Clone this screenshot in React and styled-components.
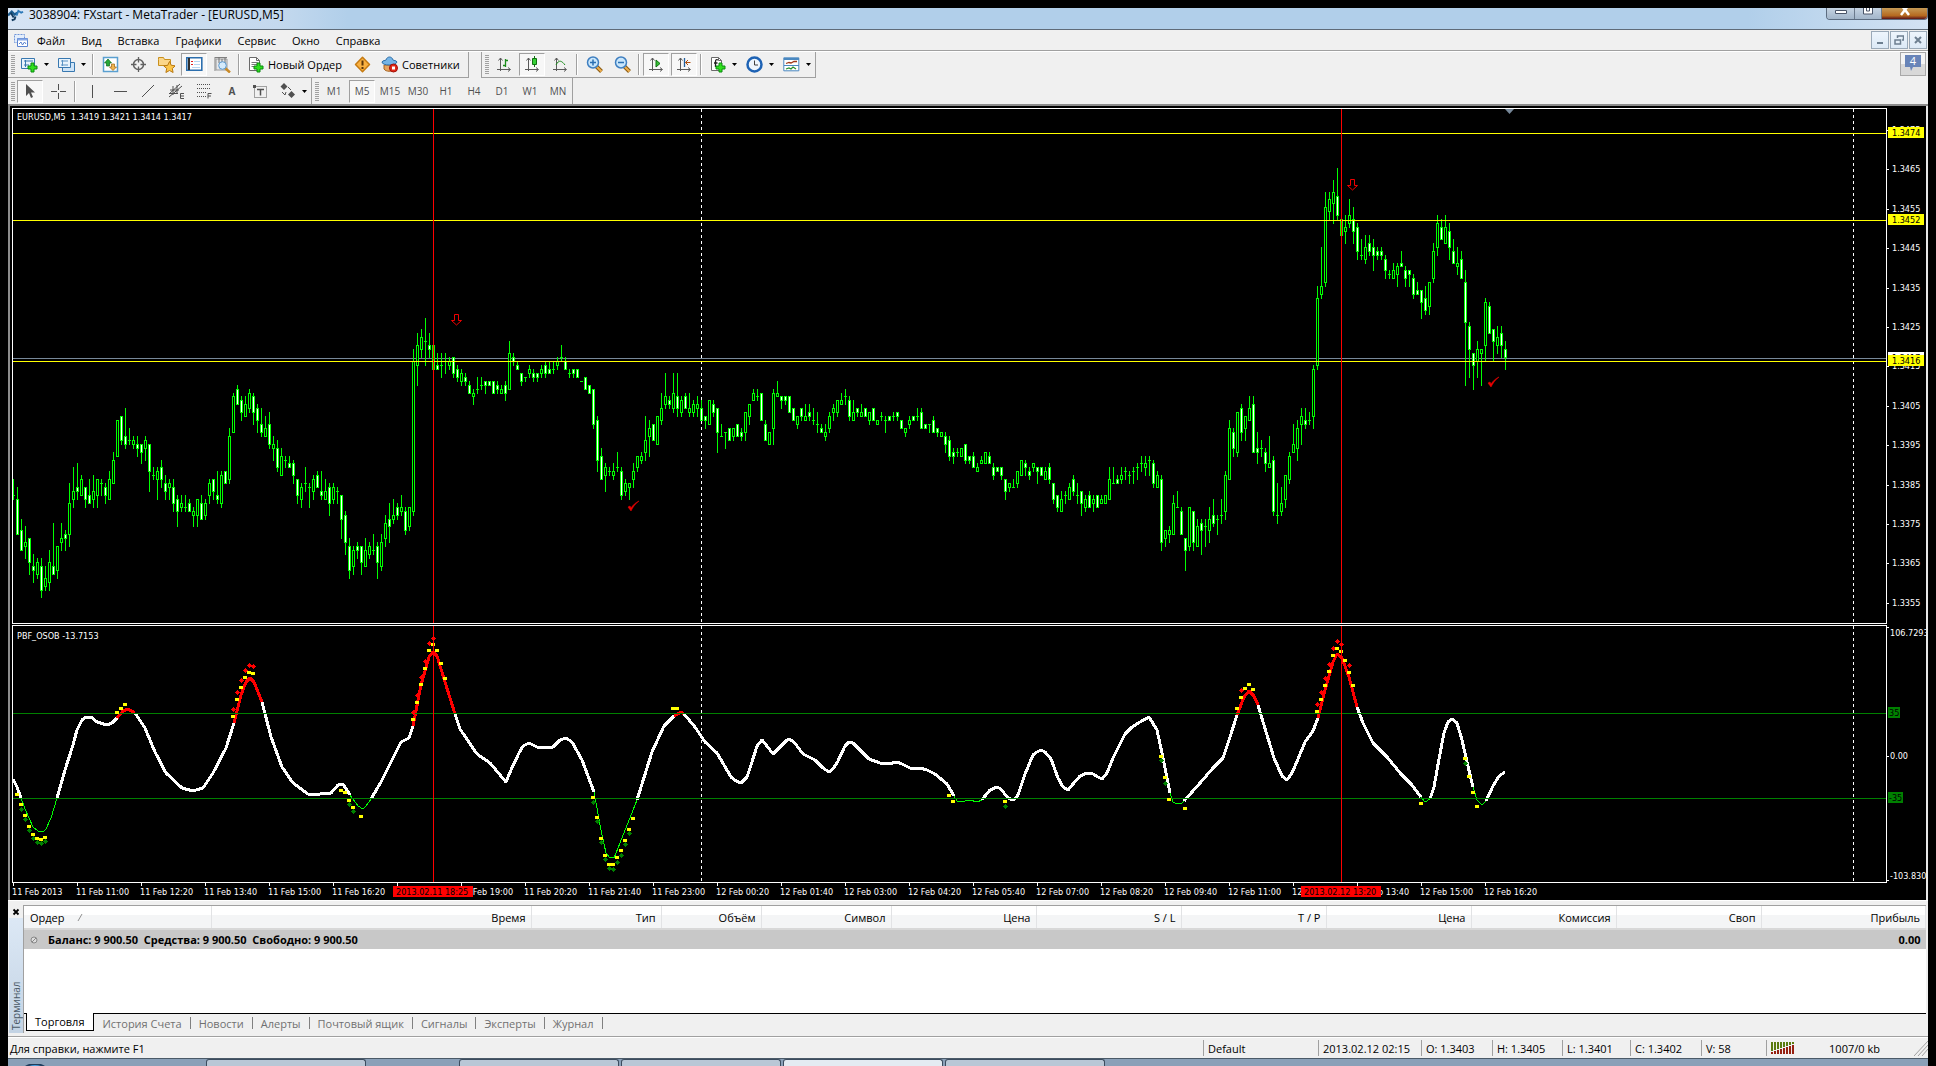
import React, { useState } from 'react'
import styled, { createGlobalStyle, css } from 'styled-components'

const GlobalStyle = createGlobalStyle`
  * { box-sizing: border-box; }
  body {
    margin: 0;
    background: #000;
    color: #000;
    font-family: "Open Sans", "Noto Sans", sans-serif;
    font-size: 11px;
  }
  button { font: inherit; color: inherit; padding: 0; border: 0; background: none; }
`

/* ---------- window ---------- */

const Desktop = styled.div`
  min-height: 100vh;
  padding: 8px 8px 0;
  overflow: hidden;
`

const TitleBar = styled.header`
  display: flex;
  justify-content: space-between;
  height: 22px;
  background: linear-gradient(90deg, #d6e4f4 0, #c4d9ee 270px, #b1cfea 340px, #b1cfea calc(100% - 180px), #d3e2f3 100%);
  border-bottom: 1px solid #5f6b78;
`

const Title = styled.h1`
  display: flex;
  gap: 5px;
  margin: 0;
  font-size: 12px;
  line-height: 14px;
  font-weight: 400;
`

const WindowButtons = styled.div`
  display: flex;
  height: 12px;
  border: 1px solid #5c6c80;
  border-top: 0;
  border-radius: 0 0 4px 4px;
  overflow: hidden;
`

const WindowButton = styled.button`
  display: flex;
  justify-content: center;
  width: ${p => (p.$close ? 46 : 27)}px;
  border-left: ${p => (p.$first ? 0 : '1px solid #6b7a8c')};
  background: ${p => (p.$close ? 'linear-gradient(#c69a55, #b5691f 70%, #5a1218)' : 'linear-gradient(#c5d3e2, #a3b6ca)')};
`

const MenuBar = styled.nav`
  display: flex;
  align-items: center;
  height: 21px;
  padding-left: 5px;
  background: #f0f0f0;
  border-bottom: 1px solid #a0a0a0;
`

const MenuItems = styled.div`
  display: flex;
  gap: 16px;
  padding-left: 9px;
`

const MenuItem = styled.button`
  height: 19px;
  line-height: 17px;
`

const MdiButtons = styled.div`
  display: flex;
  gap: 1px;
  margin-left: auto;
  padding-right: 1px;
`

const MdiButton = styled.button`
  display: flex;
  align-items: center;
  justify-content: center;
  width: 18px;
  height: 18px;
  border: 1px solid #9aa9b8;
  background: linear-gradient(#eef5fc, #dce9f6);
`

const ToolArea = styled.div`
  display: flex;
  justify-content: space-between;
  background: #f0f0f0;
  border-top: 1px solid #fff;
  border-bottom: 2px solid #8c8c8c;
`

const ToolRows = styled.div`
  flex: 1;
`

const ToolRow = styled.div`
  display: flex;
  gap: ${p => p.$gap || 0}px;
`

const Toolbar = styled.div`
  display: flex;
  align-items: center;
  height: 26px;
  border-right: 1px solid #a0a0a0;
  border-left: ${p => (p.$edge ? '1px solid #a0a0a0' : '0')};
  border-bottom: ${p => (p.$last ? 0 : '1px solid #a0a0a0')};
  padding-left: 2px;
`

const Grip = styled.span`
  width: 4px;
  height: 19px;
  margin: 0 1px;
  background: repeating-linear-gradient(#a0a0a0 0 1px, #f0f0f0 1px 2px);
`

const ToolButton = styled.button`
  display: flex;
  align-items: center;
  justify-content: center;
  width: 26px;
  height: 23px;
  margin: 0 1px;
  color: #505050;
  font-size: 10px;
  ${p => p.$pressed && css`
    border: 1px solid #a0a0a0;
    border-right-color: #fff;
    border-bottom-color: #fff;
    background: #f7f7f7;
  `}
`

const DropButton = styled(ToolButton)`
  justify-content: flex-start;
  width: 35px;
  padding-left: 4px;
  gap: 5px;
`

const TextButton = styled.button`
  display: flex;
  align-items: center;
  gap: 4px;
  height: 23px;
  min-width: ${p => p.$min}px;
  padding-left: 5px;
`

const Divider = styled.span`
  width: 2px;
  height: 21px;
  margin: 0 2px;
  border-left: 1px solid #a0a0a0;
  border-right: 1px solid #fff;
`

const NoticeButton = styled.button`
  width: 26px;
  height: 24px;
  margin: 0 2px;
  border: 1px solid #a8a8a8;
  background: linear-gradient(#f4f4f4 50%, #d8d8d8 50%);
`

/* ---------- chart ---------- */

const ChartArea = styled.main`
  padding: 2px 0 0 2px;
  border-left: 2px solid #8c8c8c;
  border-right: 2px solid #e8e8e8;
  background: #000;
`

const ChartRow = styled.div`
  display: flex;
  margin-bottom: 1px;
`

const Pane = styled.section`
  flex: 1;
  height: ${p => p.$height}px;
  border: 1px solid #fff;
`

const Scale = styled.aside`
  flex: none;
  width: 39px;
`

const Drawing = styled.svg`
  display: block;
  width: 100%;
  height: 100%;
  overflow: hidden;
  font-family: "DejaVu Sans Condensed", "DejaVu Sans", sans-serif;
  font-size: 9px;
`

const TimeScale = styled.footer`
  height: 17px;
  margin-top: -1px;
`

/* ---------- terminal ---------- */

const Terminal = styled.section`
  display: flex;
  padding: 4px 2px 3px 0;
  background: #f0f0f0;
  border-top: 1px solid #fff;
  border-bottom: 1px solid #a0a0a0;
`

const TerminalSide = styled.div`
  display: flex;
  flex-direction: column;
  width: 15px;
  padding-left: 1px;
`

const CloseTerminal = styled.button`
  height: 13px;
  line-height: 0;
`

const TerminalName = styled.div`
  flex: 1;
  padding: 3px 0;
  background: linear-gradient(#c3d3e4, #dce8f5);
  color: #4b5a68;
  font-size: 10px;
  line-height: 14px;
  writing-mode: vertical-rl;
  transform: rotate(180deg);
`

const TerminalBody = styled.div`
  flex: 1;
  border-left: 1px solid #a0a0a0;
  border-top: 1px solid #a0a0a0;
`

const Sheet = styled.div`
  height: 108px;
  background: #fff;
  border-bottom: 1px solid #000;
`

const Orders = styled.table`
  width: 100%;
  table-layout: fixed;
  border-collapse: collapse;
  line-height: 16px;
`

const HeadCell = styled.th`
  height: 23px;
  padding: 1px 5px 0 6px;
  font-weight: 400;
  text-align: ${p => (p.$left ? 'left' : 'right')};
  background: linear-gradient(#fff 40%, #f4f5f6 41%);
  border-right: 1px solid #e2e3e5;
  border-bottom: 2px solid #d8d8d8;
`

const SumCell = styled.td`
  height: 20px;
  padding: 0 5px 0 6px;
  font-weight: 700;
  background: #c8c8c8;
  text-align: ${p => (p.$right ? 'right' : 'left')};
  span { display: flex; align-items: center; gap: 10px; white-space: pre; }
`

const Tabs = styled.div`
  display: flex;
  height: 19px;
  padding-left: 2px;
`

const Tab = styled.button`
  height: 18px;
  padding: 0 9px 0 8px;
  color: #707070;
  background: linear-gradient(#808080, #808080) right 3px / 1px 12px no-repeat;
  ${p => p.$active && css`
    margin-top: -1px;
    color: #000;
    background: #fff;
    border: 1px solid #000;
    border-top: 0;
  `}
`

const StatusBar = styled.footer`
  display: flex;
  align-items: center;
  height: 22px;
  background: #f0f0f0;
  border-top: 1px solid #fff;
  border-bottom: 1px solid #4b5a68;
`

const StatusCell = styled.span`
  display: flex;
  align-items: center;
  width: ${p => p.$width}px;
  height: 16px;
  padding-left: 4px;
  border-left: 1px solid #a0a0a0;
`

const StatusHelp = styled.span`
  flex: 1;
  padding-left: 2px;
`

const Traffic = styled.span`
  flex: 1;
  text-align: center;
`

const TaskBar = styled.div`
  display: flex;
  height: 7px;
  background: #8aa0b8;
  overflow: hidden;
`

const StartZone = styled.div`
  flex: none;
  width: ${p => p.$width}px;
  padding-left: ${p => p.$pad}px;
`

const TaskItem = styled.div`
  flex: none;
  width: 160px;
  margin-right: 2px;
  border: 1px solid #3c4c5e;
  border-bottom: 0;
  border-radius: 3px 3px 0 0;
  background: ${p => (p.$active ? '#e4ebf2' : '#b9c7d6')};
`

/* ---------- data ---------- */

// high, body top, body bottom, low as points under 1.3416; d = falling bar
const BARS = `
30,34,34,35 32,35,44,44d 40,43,48,48d 42,46,47,50 45,45,51,54d 49,52,53,56d 50,51,54,55 50,52,58,60d 52,55,57,58 48,51,56,58
41,52,54,54d 47,47,53,55 41,45,46,48 43,44,45,48d 31,36,44,47 27,33,35,37 26,32,33,35d 29,30,34,34 32,32,35,37d 30,34,36,36d
29,33,35,37 30,30,34,37 30,31,31,34 31,32,34,36d 28,30,35,35 23,25,31,31 15,15,24,24 14,14,20,21d 12,19,21,22d 17,20,20,21
19,20,21,22 19,21,22,24d 21,21,23,26d 19,20,22,25 21,21,28,33d 27,29,29,30 27,28,30,35 25,27,30,32d 29,31,33,35d 30,31,32,35
30,32,36,38d 34,35,38,42d 34,36,37,38 34,37,37,38 35,36,38,38d 37,38,39,42 35,35,39,42 34,36,40,40d 35,36,39,40 30,31,34,36
30,30,33,35d 28,34,35,36d 28,29,36,37 28,28,31,31d 17,19,30,31 8,9,18,18 6,7,11,11d 9,10,13,15d 9,11,14,14 7,8,12,13
8,9,13,16d 11,12,15,18d 12,16,18,19d 14,17,19,19 13,16,21,22d 19,21,22,25 20,22,27,28d 22,24,29,29 24,25,25,27 24,26,27,27d
25,26,29,31d 30,30,34,36d 31,32,35,37 27,31,31,33 31,32,32,37 29,30,33,35 28,29,32,32d 28,33,34,35d 30,33,35,35 31,32,36,39d
31,32,35,36 32,33,33,36 34,34,40,45d 38,39,46,49d 45,47,53,55d 47,48,52,54 46,47,48,50d 47,47,51,54d 45,48,52,52 46,47,49,50
44,48,48,49 46,47,51,55d 44,46,52,53 39,41,45,47 36,40,42,46d 35,39,40,41 36,37,39,40d 34,37,38,39 37,38,43,44d 37,37,42,43
-3,0,38,39 -7,-4,1,6 -8,-6,-3,-1 -11,-5,-5,1 -7,-4,-3,-1d -4,-4,2,2d -2,1,2,2d -2,1,1,4 -2,0,0,3 -1,0,1,2
-1,-1,3,4d 1,2,4,5d 2,3,5,6 3,4,5,6d 5,6,8,8d 7,8,9,11 4,7,7,8 4,6,6,7 5,5,6,8d 5,5,6,6d
5,5,8,8d 5,6,7,8d 6,7,8,8 5,6,8,10d -5,-2,7,7 -2,-1,0,1d 0,1,2,2d 3,3,5,6d 4,4,4,5 1,2,3,4
2,3,4,5d 3,3,4,5d 1,2,3,4 0,1,3,4d 0,2,3,3d 0,2,2,3 -1,0,1,2 -4,-1,-1,0 -1,0,2,2d 2,3,3,4
2,2,3,4d 2,2,4,4d 5,5,5,5 4,4,7,7d 6,6,8,8d 7,7,16,17d 14,15,25,28d 22,24,30,30d 26,27,29,33 27,28,28,29
26,28,29,30 23,27,27,28 27,28,34,35d 30,31,33,34 31,31,32,35 26,28,30,32 24,24,27,28 23,24,25,26 14,20,23,25 15,17,19,24
16,16,20,20d 14,14,21,21 8,12,15,16 3,9,11,12 9,10,11,12d 3,8,12,13 3,9,12,14d 9,10,13,14 8,9,12,12d 8,12,13,14
10,11,13,14 9,11,12,14 10,12,15,15d 14,14,15,17d 10,10,16,16 10,11,13,14d 12,12,18,23d 16,19,19,19 18,18,18,22 17,17,20,20d
17,17,19,20 16,16,19,19d 17,18,19,20d 13,13,18,20 11,11,14,16 7,8,10,10 7,9,9,10 8,8,15,15d 15,16,20,20d 18,18,21,21
7,8,17,21 5,8,9,9 9,9,10,12d 9,9,10,11d 9,9,13,13d 12,12,15,15d 14,14,16,17 12,12,14,15d 11,14,15,15 11,13,14,15d
12,15,15,16 13,16,16,18 16,17,18,18d 16,18,19,20 13,14,17,18 11,12,13,15 10,10,13,14 8,10,11,11 7,9,9,11 9,10,14,15d
10,13,15,15 12,12,13,14d 11,13,14,14 12,12,14,14d 13,13,15,16 12,12,15,15d 15,15,16,16 13,14,14,15 14,15,15,18 14,14,15,15d
13,14,14,15 13,13,14,15d 15,15,17,17d 17,17,18,19 14,15,16,17 14,14,15,15d 12,14,14,15 12,13,17,17d 16,16,17,17d 16,16,16,18
14,15,18,18d 17,17,18,19d 18,18,19,19 18,19,21,23d 19,20,24,25d 22,23,24,26d 22,23,23,24 22,22,24,24 21,21,25,26d 24,24,25,26d
23,24,27,27d 26,27,28,28 24,25,26,26 23,23,26,26 23,24,26,26d 26,27,29,30d 27,27,28,28d 27,27,29,30d 30,30,33,35d 31,31,32,33
30,32,32,32 28,28,31,32 25,25,29,29 25,26,27,29d 27,28,29,30d 26,26,27,28 27,27,28,31d 27,27,29,29d 27,28,30,30 26,27,30,31d
31,31,35,36d 34,34,37,38d 33,35,38,38 33,34,34,36 31,32,35,35 29,30,33,34d 31,34,34,36 33,33,36,39d 34,35,37,38 33,34,37,37d
34,35,36,38 34,34,37,37d 34,35,36,36 34,34,36,36 27,30,35,35 27,31,31,31 29,30,31,31d 27,29,30,31 27,28,28,30 28,29,29,31
27,28,28,31 26,27,27,30 24,26,26,28 24,26,27,29 24,25,25,29 25,26,31,32d 28,29,32,32 29,30,46,48d 43,43,45,47 42,43,44,46
34,36,44,44 33,37,37,37 37,38,44,44d 45,45,48,53d 37,37,47,48 38,38,46,48d 40,42,47,47 40,41,43,49d 40,42,42,47 37,40,43,46
35,39,41,42d 39,40,40,44 35,39,39,41 28,29,38,40 15,17,30,30 17,18,22,24d 13,13,23,24 11,12,18,20d 14,14,17,20 9,12,15,15
9,11,23,23d 18,22,23,26d 20,22,22,24 22,23,26,28d 19,26,27,27 24,25,38,39d 31,39,39,41 32,36,38,39 29,29,35,37 23,24,30,31
16,21,23,23 15,17,22,25 12,14,16,21 12,15,16,17d 13,15,15,16 1,2,14,17 -19,-16,1,2 -29,-19,-17,-16 -43,-39,-20,-19 -43,-41,-38,-36
-46,-43,-40,-35 -49,-42,-37,-36d -36,-36,-32,-32d -37,-34,-33,-30 -41,-37,-35,-34 -39,-36,-33,-30d -35,-34,-28,-26d -31,-27,-27,-26 -32,-29,-26,-25 -32,-30,-28,-27d
-31,-29,-27,-23d -29,-28,-27,-26d -29,-28,-27,-26d -27,-26,-23,-21d -23,-22,-22,-21 -25,-23,-21,-21 -25,-24,-22,-19 -28,-25,-24,-24d -24,-23,-21,-19d -23,-23,-22,-19d
-22,-21,-17,-16d -20,-18,-17,-17d -18,-18,-15,-11d -19,-16,-13,-12d -20,-20,-14,-12 -30,-28,-21,-20 -37,-35,-29,-27 -36,-34,-31,-31d -37,-34,-30,-30 -35,-33,-29,-26d
-31,-28,-25,-25d -29,-25,-24,-22 -28,-26,-21,-21d -23,-20,-10,6d -10,-9,-3,4d -2,-2,1,7d -5,-3,0,4 -3,-3,-2,6 -16,-15,-4,0 -15,-14,-7,-7d
-8,-8,-5,0d -9,-6,-4,-2 -9,-7,-4,-1d -5,-3,-1,2d
`.trim().split(/\s+/).map(row => ({ down: row.endsWith('d'), v: row.replace('d', '').split(',').map(Number) }))

// oscillator, split where its colour changes: w neutral, r overbought, g oversold
const WAVE = [
  ['w', '13,779 17,787 21,798'],
  ['g', '21,798 25,809 29,818 33,827 38,831 43,832 46,829 51,818 57,798'],
  ['w', '57,798 65,770 73,745 77,730 82,720 86,717 91,717 97,722 107,725 112,723 117,718'],
  ['r', '117,718 123,711 128,709 135,713'],
  ['w', '135,713 145,728 155,752 166,773 182,788 193,791 203,788 213,773 226,748 234,723'],
  ['r', '234,723 241,695 246,682 250,678 254,682 262,702'],
  ['w', '262,702 271,737 282,767 293,783 308,794 320,794 331,793 338,785 343,784 350,795'],
  ['g', '350,795 358,806 363,809 366,806 371,799'],
  ['w', '371,799 381,782 401,742 409,738 413,726'],
  ['r', '413,726 421,685 429,657 433,652 437,656 445,682 455,714'],
  ['w', '455,714 460,729 477,754 490,763 506,782 511,770 519,753 523,746 529,743 537,747 553,747 560,740 566,738 572,742 582,760 594,792'],
  ['g', '594,792 601,830 606,853 609,857 614,858 620,843 637,800'],
  ['w', '637,800 652,752 664,726 674,716'],
  ['r', '674,716 681,712 684,714'],
  ['w', '684,714 695,727 705,742 717,753 731,777 736,781 741,783 747,777 752,762 757,746 762,740 767,746 773,754 780,747 787,740 789,739 794,742 803,754 815,760 823,768 829,772 833,769 838,761 845,746 849,742 853,743 862,752 869,759 880,763 888,764 897,762 902,764 912,769 920,768 927,770 935,774 947,784 954,796'],
  ['g', '954,796 957,801 965,801 970,800 977,802 982,800'],
  ['w', '982,800 985,796 990,790 997,787 1001,789 1007,797 1012,800 1015,799 1018,795 1025,774 1033,755 1037,752 1041,750 1045,752 1051,759 1058,778 1063,787 1068,790 1073,784 1080,776 1087,773 1093,774 1098,777 1102,779 1107,773 1113,758 1125,734 1132,727 1140,722 1149,717 1157,730 1162,753 1170,793'],
  ['g', '1170,793 1173,802 1177,804 1182,803 1184,801'],
  ['w', '1184,801 1192,792 1200,783 1213,768 1223,758 1230,737 1237,715'],
  ['r', '1237,715 1244,697 1249,691 1254,696 1258,705'],
  ['w', '1258,705 1267,735 1274,758 1282,776 1287,780 1292,773 1298,759 1305,742 1313,731 1318,718'],
  ['r', '1318,718 1325,690 1333,662 1337,654 1342,658 1349,677 1357,707'],
  ['w', '1357,707 1363,723 1373,743 1387,757 1401,774 1411,784 1421,797'],
  ['g', '1421,797 1425,802 1430,799'],
  ['w', '1430,799 1434,787 1439,759 1444,733 1448,722 1452,719 1457,723 1462,740 1467,762 1473,787'],
  ['g', '1473,787 1477,800 1482,805 1486,801'],
  ['w', '1486,801 1493,786 1499,776 1505,772'],
]
const WAVE_COLOR = { w: '#fff', r: '#f00', g: '#0f0' }

const points = text => text.split(' ').map(p => p.split(',').map(Number))

const YELLOW = points('17,794 21,804 25,815 29,826 33,834 37,838 41,839 45,837 117,712 121,708 125,704 233,716 237,699 241,687 245,677 249,672 253,673 341,790 345,792 349,800 353,807 361,816 413,719 417,702 421,684 425,668 429,650 433,644 437,650 441,663 445,678 593,797 597,817 601,838 605,855 609,864 613,864 617,857 621,850 625,840 629,829 633,818 673,708 677,708 949,795 953,801 1005,801 1161,756 1165,777 1169,799 1185,808 1237,708 1241,697 1245,688 1249,684 1253,689 1317,711 1321,699 1325,685 1329,671 1333,655 1337,648 1341,651 1345,660 1349,672 1353,685 1421,803 1465,758 1469,776 1473,792 1477,806')
const RED = points('233,709 237,692 241,680 245,670 249,665 253,666 413,712 417,695 421,677 425,661 429,643 433,638 1241,690 1317,704 1321,692 1325,678 1329,664 1333,648 1337,641 1341,644 1349,665')
const GREEN = points('21,809 25,819 29,830 33,838 37,842 41,843 45,841 349,804 353,811 593,802 597,821 601,842 605,859 609,868 613,869 617,862 621,855 625,844 629,833 1005,806 1161,760 1165,783 1465,763')

const TIMES = ['11 Feb 2013', '11 Feb 11:00', '11 Feb 12:20', '11 Feb 13:40', '11 Feb 15:00', '11 Feb 16:20', '11 Feb 17:40', '11 Feb 19:00',
  '11 Feb 20:20', '11 Feb 21:40', '11 Feb 23:00', '12 Feb 00:20', '12 Feb 01:40', '12 Feb 03:00', '12 Feb 04:20', '12 Feb 05:40',
  '12 Feb 07:00', '12 Feb 08:20', '12 Feb 09:40', '12 Feb 11:00', '12 Feb 12:20', '12 Feb 13:40', '12 Feb 15:00', '12 Feb 16:20']

const COLUMNS = [['Ордер', 187], ['Время', 320], ['Тип', 130], ['Объём', 100], ['Символ', 130], ['Цена', 145], ['S / L', 145], ['T / P', 145],
  ['Цена', 145], ['Комиссия', 145], ['Своп', 145], ['Прибыль']]

const MENU = ['Файл', 'Вид', 'Вставка', 'Графики', 'Сервис', 'Окно', 'Справка']
const PERIODS = ['M1', 'M5', 'M15', 'M30', 'H1', 'H4', 'D1', 'W1', 'MN']
const TABS = ['Торговля', 'История Счета', 'Новости', 'Алерты', 'Почтовый ящик', 'Сигналы', 'Эксперты', 'Журнал']
const QUOTES = [['Default', 115], ['2013.02.12 02:15', 103], ['O: 1.3403', 71], ['H: 1.3405', 70], ['L: 1.3401', 68], ['C: 1.3402', 71], ['V: 58', 65]]

/* ---------- icons ---------- */

const Plus = ({ x = 8, y = 7 }) => (
  <path d={`M${x + 3} ${y}h3v3h3v3h-3v3h-3v-3h-3v-3h3z`} fill="#2fe01c" stroke="#0a8a10" />
)
const Axes = () => <path d="M4.500 2v13M1 13.500h13M2.500 4.500l2-2.500 2 2.500M12 11.500l2.500 2-2.500 2" stroke="#5a5a5a" fill="none" />
const Lens = () => (
  <>
    <path d="M10.500 10.500l5 5" stroke="#8a5a10" strokeWidth="4" />
    <path d="M10.500 10.500l5 5" stroke="#f0b050" strokeWidth="2" />
    <circle cx="7" cy="6.500" r="5.500" fill="#c9e6fb" stroke="#3f7fc0" strokeWidth="1.500" />
  </>
)
const Sheetlet = () => (
  <>
    <path d="M2.500 1.500h7l3 3v10h-10z" fill="#fff" stroke="#6a6a6a" />
    <path d="M9.500 1.500v3h3" fill="none" stroke="#6a6a6a" />
  </>
)

const GLYPHS = {
  logo: <><path d="M0 8l4-4 3 3 3-2" stroke="#1b5b8e" strokeWidth="2.500" fill="none" /><path d="M9 8l2-5 3 2 2-1" stroke="#2a78b8" strokeWidth="2" fill="none" /><path d="M3 5l3 5M4 13l3-1 1-3" stroke="#123a5e" strokeWidth="2" fill="none" /></>,
  app: <><path d="M1.500 1.500h10v8h-10z" fill="#e4eefb" stroke="#6f94d8" strokeDasharray="2 1" /><path d="M4.500 5.500h10v8h-10z" fill="#fff" stroke="#5a83d0" /><path d="M4.500 6.500h10" stroke="#86a8e6" strokeWidth="2" /><path d="M6 11l2-2 1.500 3 2-3 1.500 2" stroke="#5a83d0" fill="none" /></>,
  newChart: <><path d="M.5 2.500h13v10H.5z" fill="#e8f3fc" stroke="#3878b0" /><path d="M3 5h9M3 9h5M4.500 4v7" stroke="#3878b0" /><Plus x={7} y={7} /></>,
  profiles: <><path d="M4.500 6.500h12v9h-12z" fill="#cfe4f7" stroke="#3878b0" /><path d="M.5 2.500h12v9H.5z" fill="#e8f3fc" stroke="#3878b0" /><path d="M3 5h7M3 9h7M4.500 4v6" stroke="#5a93c4" /></>,
  market: <><path d="M1.500 1.500h14v14h-14z" fill="#fff" stroke="#5a9fd0" strokeWidth="1.500" /><path d="M6 3l3.500 4H7.500v3h-3V7h-2z" fill="#28a838" stroke="#0e6a1a" strokeWidth=".7" /><path d="M11 14.500L7.500 11h2V8h3v3h2z" fill="#f0b450" stroke="#9a6410" strokeWidth=".7" /></>,
  target: <><circle cx="8.500" cy="8.500" r="5" fill="none" stroke="#606060" strokeWidth="1.500" /><path d="M8.500 1v5.500M8.500 10.500V16M1 8.500h5.500M10.500 8.500H16" stroke="#606060" strokeWidth="1.300" /></>,
  navigator: <><path d="M.5 3.500V1.500h5l1 2h6v6h-12z" fill="#fbd68a" stroke="#c8901e" /><path d="M11.500 5.500l1.800 3.800 4 .5-3 2.700.8 4-3.600-2-3.600 2 .8-4-3-2.700 4-.5z" fill="#fcc64a" stroke="#b87812" /></>,
  terminal: <><path d="M.8 1.800h15v12.500H.8z" fill="#fff" stroke="#2c6fae" strokeWidth="1.600" /><path d="M3 2v12" stroke="#303030" strokeWidth="2" /><path d="M5 5.500h2M5 8.500h2" stroke="#e02020" /><path d="M8 5.500h6M8 8.500h6M6 11.500h8" stroke="#b7d6f0" /></>,
  tester: <><path d="M1 1.500h12M1 1v14" stroke="#808080" /><path d="M2 3h11v11H2z" fill="#e6e8ea" stroke="#9a9a9a" /><path d="M5 1v6M8 3v4M11 2v5" stroke="#707070" /><path d="M11 12l5 4.500" stroke="#c98a28" strokeWidth="2.500" /><circle cx="8.500" cy="9.500" r="3.800" fill="#d5ebfb" stroke="#5a98cf" /></>,
  order: <><Sheetlet /><path d="M4.500 6.500h6M4.500 8.500h6M4.500 10.500h4" stroke="#7a7a7a" /><Plus x={7} y={7} /></>,
  editor: <><path d="M8.500 1.200l7 7.300-7 7.300-7-7.300z" fill="#f9b040" stroke="#c57a12" strokeWidth="1.500" strokeLinejoin="round" /><path d="M8.500 4.500v5M8.500 11v2" stroke="#5a3408" strokeWidth="2" /></>,
  expert: <><path d="M3 9h10v4c-2 3-8 3-10 0z" fill="#e7a560" stroke="#a86420" /><path d="M1 6c0 4 14 4 15 0-1-2-3-1-4-2-1-4-6-4-7 0-1 1-3 0-4 2z" fill="#74b4e6" stroke="#2c6ea8" /><circle cx="12.500" cy="12" r="4" fill="#e02818" stroke="#a01008" /><path d="M11 10.500h3v3h-3z" fill="#fff" /></>,
  bars: <><Axes /><path d="M9.500 3v8M7 9.500h2.500M9.500 4.500H12" stroke="#1b8c1b" strokeWidth="1.300" /></>,
  candles: <><Axes /><path d="M10.500 0v11" stroke="#107010" /><path d="M8.500 2.500h4v6h-4z" fill="#35d035" stroke="#107010" /></>,
  line: <><Axes /><path d="M4 9c3-6 6-4 9 0" stroke="#1b8c1b" fill="none" /></>,
  zoomIn: <><Lens /><path d="M4 6.500h6M7 3.500v6" stroke="#2a6fb2" strokeWidth="1.500" /></>,
  zoomOut: <><Lens /><path d="M4 6.500h6" stroke="#2a6fb2" strokeWidth="1.500" /></>,
  scroll: <><Axes /><path d="M8 4l4 3.500L8 11z" fill="#35c035" stroke="#107010" /></>,
  shift: <><Axes /><path d="M8.500 2v9" stroke="#2060a0" strokeWidth="1.300" /><path d="M9.500 6.500h5M12 4L9.500 6.500 12 9" stroke="#b05010" fill="none" /></>,
  indicator: <><Sheetlet /><path d="M9 4c-2-1-2.500 0-2.500 2v5M5 7h3.500" stroke="#202020" fill="none" strokeWidth="1.300" /><Plus x={7} y={7} /></>,
  clock: <><circle cx="8.500" cy="8.500" r="7" fill="#eef6fd" stroke="#1d62b4" strokeWidth="2.500" /><path d="M8.500 4.500V9H12" stroke="#404040" fill="none" /></>,
  template: <><path d="M.8 1.800h15v13H.8z" fill="#fff" stroke="#4a88c0" /><path d="M1 3h15" stroke="#4a88c0" strokeWidth="2" /><path d="M1 9.500h15" stroke="#4a88c0" /><path d="M3 7.500l3-1 2 .5 3-1.500h3" stroke="#a03818" fill="none" strokeWidth="1.300" /><path d="M3 13l3-1 2 1 2-2 3 2" stroke="#28902c" fill="none" strokeWidth="1.300" /></>,
  cursor: <path d="M4 1v12l3-3 2 5 2-1-2-4.500h4z" fill="#505050" />,
  cross: <path d="M8.500 1v6M8.500 10v6M1 8.500h6M10 8.500h6" stroke="#505050" />,
  vline: <path d="M8.500 2v13" stroke="#505050" />,
  hline: <path d="M2 8.500h13" stroke="#505050" />,
  trend: <path d="M2 14L14 2" stroke="#505050" />,
  channel: <><path d="M1 11L12 1M1 14L14 3M2 7h9M1 10.500h9M5 3v9M9 2v9" stroke="#505050" fill="none" /><path d="M16 10.500h-3.500v5H16M12.500 13H16" stroke="#505050" fill="none" /></>,
  fibo: <><path d="M1 1.500h14M1 5.500h14M1 9.500h9M1 13.500h9" stroke="#505050" strokeDasharray="1 1" /><path d="M15.500 10.500h-3.500v5M12 13h3" stroke="#505050" fill="none" /></>,
  label: <><path d="M2.500 3.500h12v11h-12z" fill="none" stroke="#505050" strokeDasharray="1 1" /><path d="M5 6.500h7M8.500 6.500v6" stroke="#505050" strokeWidth="1.500" /><path d="M1 2h3v3H1z" fill="#505050" /></>,
  arrows: <><path d="M5 1l3.500 3.500L5 8 1.500 4.500zM12.500 9l3.500 3.500-3.500 3.500L9 12.500z" fill="#505050" /><path d="M3 10l3 3 1-3M9 5l3 3" stroke="#505050" fill="none" /></>,
  drop: <path d="M0 0h5L2.500 3z" fill="#000" />,
}

function Glyph({ name, size = 17, box = 17 }) {
  return <svg width={size} height={size} viewBox={`0 0 ${box} ${box}`} aria-hidden="true">{GLYPHS[name]}</svg>
}

const Tool = ({ name, label, pressed }) => (
  <ToolButton aria-label={label} $pressed={pressed}><Glyph name={name} /></ToolButton>
)

const DropTool = ({ name, label }) => (
  <DropButton aria-label={label}>
    <Glyph name={name} size={18} box={18} />
    <svg width="5" height="3" viewBox="0 0 5 3">{GLYPHS.drop}</svg>
  </DropButton>
)

/* ---------- parts ---------- */

const BASE_Y = 252
const POINT = 3.94
const toY = n => Math.round(BASE_Y + n * POINT)

function Bar({ x, bar }) {
  const [high, top, bottom, low] = bar.v.map(toY)
  return (
    <g>
      <rect x={x} y={high} width="1" height={low - high + 1} fill="#0f0" />
      {top === bottom
        ? <rect x={x - 1} y={top} width="3" height="1" fill="#0f0" />
        : <>
          <rect x={x - 1} y={top} width="3" height={bottom - top + 1} fill="#0f0" />
          <rect x={x} y={top + 1} width="1" height={Math.max(bottom - top - 1, 1)} fill={bar.down ? '#fff' : '#000'} />
        </>}
    </g>
  )
}

const DayLines = () => (
  <path d="M688.500 0v600M1840.500 0v600" stroke="#fff" strokeDasharray="3 3" shapeRendering="crispEdges" />
)
const MarkLines = () => (
  <path d="M420.500 0v600M1328.500 0v600" stroke="#f00" shapeRendering="crispEdges" />
)

const SellMark = ({ x, y }) => (
  <path d={`M${x + 3.5} ${y + 0.5}h4v6h3l-5 4.500-5-4.500h3z`} fill="none" stroke="#f00000" />
)
const CheckMark = ({ x, y }) => (
  <path d={`M${x} ${y + 6}l2-1 1 2c2-3 4-5 8-7-4 3-6 6-8 10z`} fill="#f00000" stroke="#e00000" strokeWidth=".6" />
)

function PricePane() {
  return (
    <Pane $height={516}>
      <Drawing role="img" aria-label="EURUSD,M5">
        <DayLines />
        <g shapeRendering="crispEdges">
          <rect y="249" width="100%" height="1" fill="#778899" />
          {BARS.map((bar, i) => <Bar key={i} x={i * 4} bar={bar} />)}
          <rect y="24" width="100%" height="1" fill="#ff0" />
          <rect y="111" width="100%" height="1" fill="#ff0" />
          <rect y="252" width="100%" height="1" fill="#ff0" />
        </g>
        <MarkLines />
        <path d="M1492 0h9l-4.500 5z" fill="#778899" />
        <SellMark x={438} y={205} />
        <SellMark x={1334} y={70} />
        <CheckMark x={615} y={392} />
        <CheckMark x={1475} y={268} />
        <text x="4" y="11" fill="#fff" xmlSpace="preserve">EURUSD,M5  1.3419 1.3421 1.3414 1.3417</text>
      </Drawing>
    </Pane>
  )
}

function PriceScale() {
  const ticks = Array.from({ length: 13 }, (_, i) => i)
  const tag = (y, text, fill) => (
    <g key={text}>
      <rect x="1" y={y - 6} width="36" height="11" fill={fill} />
      <text x="5" y={y + 3} fill="#000">{text}</text>
    </g>
  )
  return (
    <Scale>
      <Drawing>
        {ticks.map(i => {
          const y = Math.round(22 + i * 39.4)
          return (
            <g key={i} fill="#fff">
              <rect y={y} width="2" height="1" />
              <text x="5" y={y + 3}>{(1.3475 - i * 0.001).toFixed(4)}</text>
            </g>
          )
        })}
        {tag(250, '1.3417', '#fff')}
        {tag(25, '1.3474', '#ff0')}
        {tag(112, '1.3452', '#ff0')}
        {tag(253, '1.3416', '#ff0')}
      </Drawing>
    </Scale>
  )
}

const Diamond = ({ x, y, fill }) => (
  <path d={`M${x} ${y - 2}h1v1h1v1h1v1h-1v1h-1v1h-1v-1h-1v-1h-1v-1h1v-1h1z`} fill={fill} />
)

function OscillatorPane() {
  return (
    <Pane $height={258}>
      <Drawing role="img" aria-label="PBF_OSOB">
        <DayLines />
        <g shapeRendering="crispEdges">
          <g transform="translate(-13 -626)" fill="none">
            {WAVE.map(([kind, line], i) => (
              <polyline key={i} points={line} stroke={WAVE_COLOR[kind]} strokeWidth={kind === 'g' ? 1 : 3} strokeLinejoin="round" />
            ))}
          </g>
          <rect y="87" width="100%" height="1" fill="#008000" />
          <rect y="172" width="100%" height="1" fill="#008000" />
          <g transform="translate(-13 -626)">
            {GREEN.map(([x, y]) => <Diamond key={x} x={x} y={y} fill="#008000" />)}
            {RED.map(([x, y]) => <Diamond key={x} x={x} y={y} fill="#f00" />)}
            {YELLOW.map(([x, y]) => <rect key={x} x={x - 2} y={y - 1} width="4" height="3" fill="#ff0" />)}
          </g>
        </g>
        <MarkLines />
        <text x="4" y="13" fill="#fff">PBF_OSOB -13.7153</text>
      </Drawing>
    </Pane>
  )
}

function OscillatorScale() {
  return (
    <Scale>
      <Drawing>
        <g fill="#fff">
          <rect y="2" width="2" height="1" /><text x="3" y="11">106.7293</text>
          <rect y="131" width="2" height="1" /><text x="3" y="134">0.00</text>
          <rect y="255" width="2" height="1" /><text x="3" y="254">-103.830</text>
        </g>
        <rect x="1" y="82" width="12" height="11" fill="#008000" /><text x="2" y="91">35</text>
        <rect x="1" y="167" width="15" height="11" fill="#008000" /><text x="2" y="176">-35</text>
      </Drawing>
    </Scale>
  )
}

function TimeLine() {
  return (
    <TimeScale>
      <Drawing>
        {TIMES.map((time, i) => (
          <g key={time} fill="#fff">
            <rect x={1 + i * 64} y="0" width="1" height="3" />
            <text x={i * 64} y="12">{time}</text>
          </g>
        ))}
        {[[381, '2013.02.11 18:25'], [1289, '2013.02.12 13:20']].map(([x, time]) => (
          <g key={time}>
            <rect x={x} y="3" width="80" height="11" fill="#f00" />
            <text x={x + 3} y="12">{time}</text>
          </g>
        ))}
      </Drawing>
    </TimeScale>
  )
}

function ToolPanels() {
  const [period, setPeriod] = useState('M5')
  return (
    <ToolArea>
      <ToolRows>
        <ToolRow $gap={12}>
          <Toolbar>
            <Grip />
            <DropTool name="newChart" label="Новый график" />
            <DropTool name="profiles" label="Профили" />
            <Divider />
            <Tool name="market" label="Обзор рынка" />
            <Tool name="target" label="Окно данных" />
            <Tool name="navigator" label="Навигатор" />
            <Tool name="terminal" label="Терминал" pressed />
            <Tool name="tester" label="Тестер стратегий" />
            <Divider />
            <TextButton $min={106}><Glyph name="order" />Новый Ордер</TextButton>
            <Tool name="editor" label="MetaEditor" />
            <TextButton $min={92}><Glyph name="expert" />Советники</TextButton>
          </Toolbar>
          <Toolbar $edge>
            <Grip />
            <Tool name="bars" label="Бары" />
            <Tool name="candles" label="Японские свечи" pressed />
            <Tool name="line" label="Линия" />
            <Divider />
            <Tool name="zoomIn" label="Увеличить" />
            <Tool name="zoomOut" label="Уменьшить" />
            <Divider />
            <Tool name="scroll" label="Автопрокрутка" pressed />
            <Tool name="shift" label="Сдвиг графика" pressed />
            <Divider />
            <DropTool name="indicator" label="Индикаторы" />
            <DropTool name="clock" label="Периоды" />
            <DropTool name="template" label="Шаблоны" />
          </Toolbar>
        </ToolRow>
        <ToolRow>
          <Toolbar $last>
            <Grip />
            <Tool name="cursor" label="Курсор" pressed />
            <Tool name="cross" label="Перекрестие" />
            <Divider />
            <Tool name="vline" label="Вертикальная линия" />
            <Tool name="hline" label="Горизонтальная линия" />
            <Tool name="trend" label="Трендовая линия" />
            <Tool name="channel" label="Канал" />
            <Tool name="fibo" label="Линии Фибоначчи" />
            <ToolButton aria-label="Текст"><b>A</b></ToolButton>
            <Tool name="label" label="Метка" />
            <DropTool name="arrows" label="Стрелки" />
          </Toolbar>
          <Toolbar $last>
            <Grip />
            {PERIODS.map(p => (
              <ToolButton key={p} $pressed={p === period} onClick={() => setPeriod(p)}>{p}</ToolButton>
            ))}
          </Toolbar>
        </ToolRow>
      </ToolRows>
      <NoticeButton aria-label="Сообщения">
        <svg width="18" height="18" viewBox="0 0 18 18">
          <path d="M1 1h16v12H9l-2 4-1-4H1z" fill="#6884b8" />
          <text x="9" y="11" fill="#fff" fontSize="11" textAnchor="middle">4</text>
        </svg>
      </NoticeButton>
    </ToolArea>
  )
}

function TerminalPanel() {
  const [tab, setTab] = useState(TABS[0])
  return (
    <Terminal>
      <TerminalSide>
        <CloseTerminal aria-label="Закрыть">
          <svg width="8" height="8" viewBox="0 0 8 8"><path d="M1.500 1.500l5 5M6.500 1.500l-5 5" stroke="#000" strokeWidth="1.800" /></svg>
        </CloseTerminal>
        <TerminalName>Терминал</TerminalName>
      </TerminalSide>
      <TerminalBody>
        <Sheet>
          <Orders>
            <colgroup>{COLUMNS.map(([, w], i) => <col key={i} width={w} />)}</colgroup>
            <thead>
              <tr>
                {COLUMNS.map(([name], i) => (
                  <HeadCell key={i} $left={i === 0}>
                    {name}
                    {i === 0 && <svg width="20" height="8" viewBox="0 0 20 8"><path d="M13 7l4-7" stroke="#909090" /></svg>}
                  </HeadCell>
                ))}
              </tr>
            </thead>
            <tbody>
              <tr>
                <SumCell colSpan={11}>
                  <span>
                    <svg width="8" height="8" viewBox="0 0 8 8"><circle cx="4" cy="4" r="3" fill="#ddd" stroke="#888" /><path d="M2 6l4-4" stroke="#888" /></svg>
                    Баланс: 9 900.50  Средства: 9 900.50  Свободно: 9 900.50
                  </span>
                </SumCell>
                <SumCell $right>0.00</SumCell>
              </tr>
            </tbody>
          </Orders>
        </Sheet>
        <Tabs>
          {TABS.map(name => <Tab key={name} $active={name === tab} onClick={() => setTab(name)}>{name}</Tab>)}
        </Tabs>
      </TerminalBody>
    </Terminal>
  )
}

const Signal = () => (
  <svg width="24" height="12" viewBox="0 0 24 12" shapeRendering="crispEdges">
    {[0, 1, 2, 3, 4, 5, 6, 7].map(i => (
      <g key={i}>
        <rect x={i * 3} y="0" width="2" height={9 - i} fill="#5a7a10" />
        <rect x={i * 3} y={10 - i} width="2" height={2 + i} fill="#962010" />
      </g>
    ))}
  </svg>
)

export default function App() {
  return (
    <Desktop>
      <GlobalStyle />
      <TitleBar>
        <Title><Glyph name="logo" size={16} />3038904: FXstart - MetaTrader - [EURUSD,M5]</Title>
        <WindowButtons>
          <WindowButton $first aria-label="Свернуть"><svg width="14" height="8"><path d="M1.500 2.500h11v3h-11z" fill="#fff" stroke="#4a5568" /></svg></WindowButton>
          <WindowButton aria-label="Развернуть"><svg width="12" height="8"><path d="M1.500-2v8h9v-8M4.500-1v4h3v-4" fill="#fff" stroke="#4a5568" /></svg></WindowButton>
          <WindowButton $close aria-label="Выход"><svg width="12" height="8"><path d="M2 7l7-9M10 7L3-2" stroke="#fff" strokeWidth="2.500" fill="none" /></svg></WindowButton>
        </WindowButtons>
      </TitleBar>
      <MenuBar>
        <Glyph name="app" size={15} box={15} />
        <MenuItems>{MENU.map(item => <MenuItem key={item}>{item}</MenuItem>)}</MenuItems>
        <MdiButtons>
          <MdiButton aria-label="Свернуть окно"><svg width="10" height="10"><path d="M2 8h6" stroke="#6d7f90" strokeWidth="2" /></svg></MdiButton>
          <MdiButton aria-label="Восстановить окно"><svg width="10" height="10"><path d="M3.500 3V1h6v4H8" fill="none" stroke="#6d7f90" strokeWidth="1.500" /><path d="M1 5h5.500v4H1z" fill="none" stroke="#6d7f90" strokeWidth="1.500" /></svg></MdiButton>
          <MdiButton aria-label="Закрыть окно"><svg width="10" height="10"><path d="M2 2l6 6M8 2L2 8" stroke="#6d7f90" strokeWidth="2" /></svg></MdiButton>
        </MdiButtons>
      </MenuBar>
      <ToolPanels />
      <ChartArea>
        <ChartRow><PricePane /><PriceScale /></ChartRow>
        <ChartRow><OscillatorPane /><OscillatorScale /></ChartRow>
        <TimeLine />
      </ChartArea>
      <TerminalPanel />
      <StatusBar>
        <StatusHelp>Для справки, нажмите F1</StatusHelp>
        {QUOTES.map(([text, width]) => <StatusCell key={text} $width={width}>{text}</StatusCell>)}
        <StatusCell $width={162}><Signal /><Traffic>1007/0 kb</Traffic>
          <svg width="14" height="16" viewBox="0 0 14 16"><path d="M0 16L14 1M4 16L14 5M8 16l6-7" stroke="#a0a0a0" /></svg>
        </StatusCell>
      </StatusBar>
      <TaskBar>
        <StartZone $width={198} $pad={10}>
          <svg width="180" height="7"><ellipse cx="17" cy="15" rx="17" ry="16" fill="#1f3d5c" /><ellipse cx="17" cy="9" rx="12" ry="8" fill="#4a9fe0" /><path d="M9 7c2-5 5-6 7-4v4z" fill="#f08a28" /><path d="M72 7c2-4 5-3 7 0z" fill="#f4c430" /><path d="M156 5h15v5h-15z" fill="#3f78b8" /></svg>
        </StartZone>
        <TaskItem />
        <StartZone $width={91} $pad={20}><svg width="60" height="7"><circle cx="4" cy="10" r="5" fill="#5aa0d8" /><circle cx="50" cy="10" r="6" fill="#b8d0e8" /></svg></StartZone>
        <TaskItem />
        <TaskItem />
        <TaskItem $active />
        <TaskItem />
      </TaskBar>
    </Desktop>
  )
}
